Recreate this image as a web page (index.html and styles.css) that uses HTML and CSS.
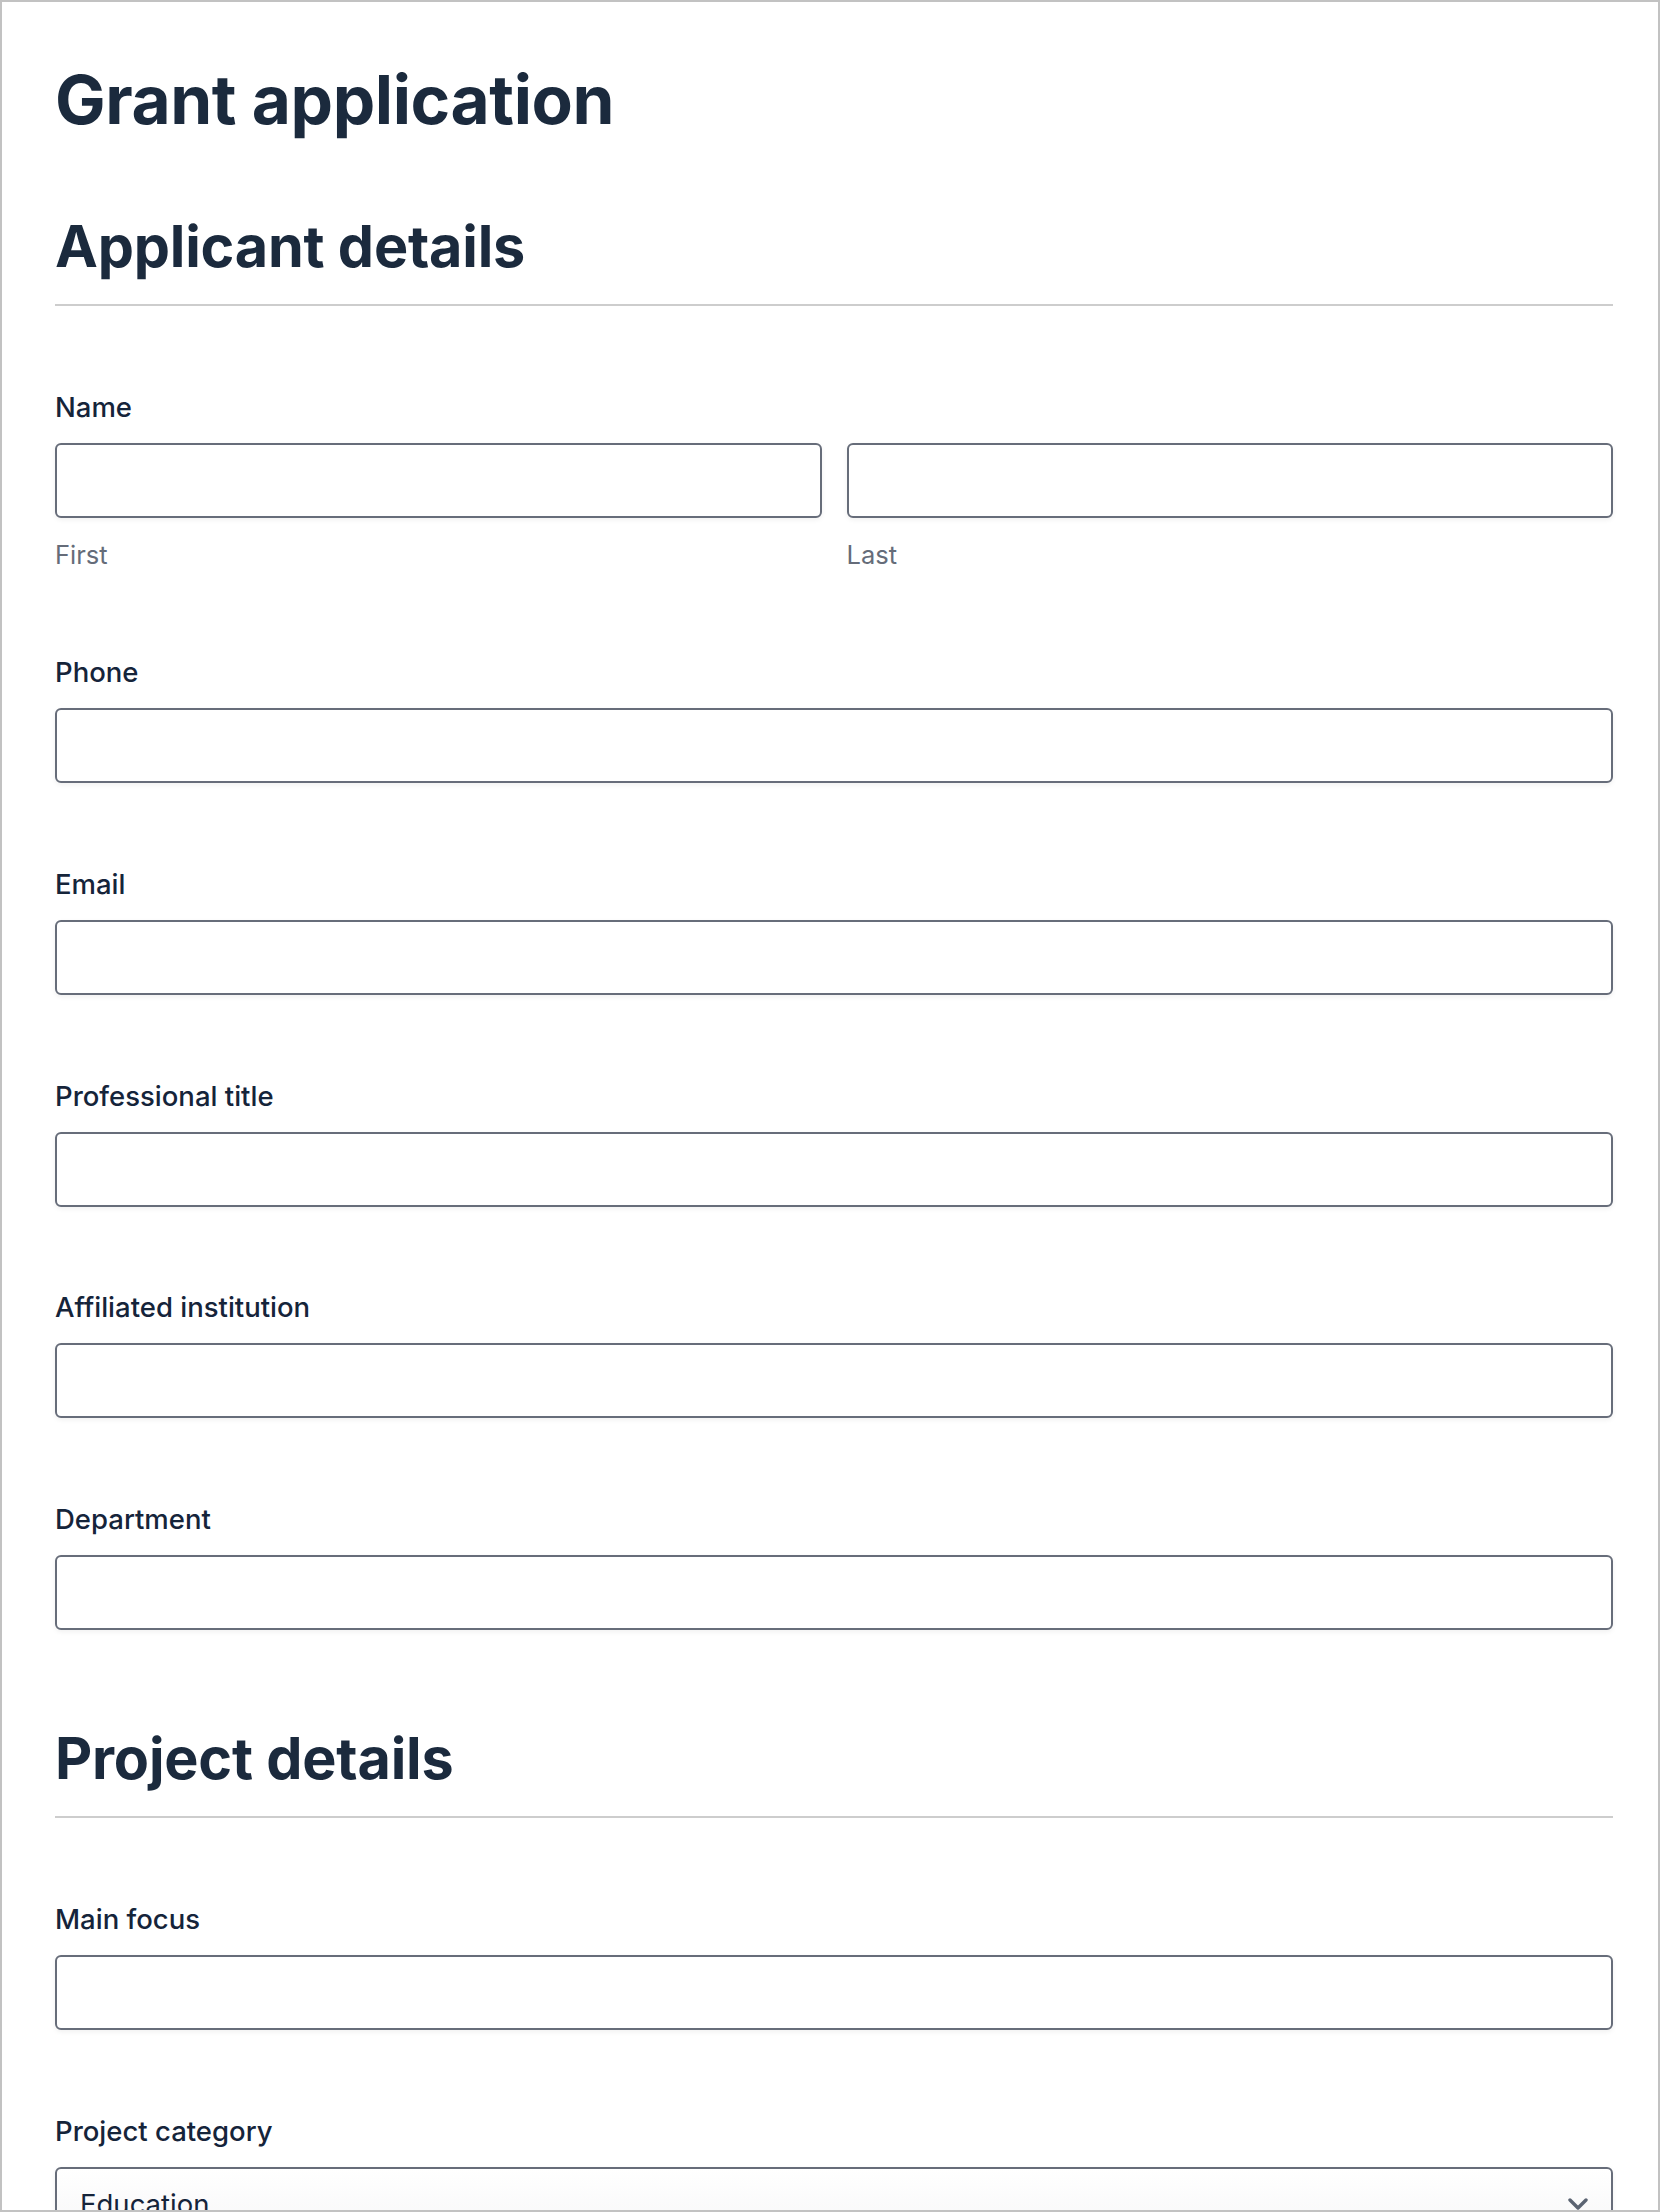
FILE: index.html
```html
<!DOCTYPE html>
<html lang="en">
<head>
  <meta charset="UTF-8">
  <meta name="viewport" content="width=device-width, initial-scale=1">
  <title>Grant application</title>
  <link rel="stylesheet" href="styles.css">
</head>
<body>
  <div class="frame">
    <form class="form">
      <h1>Grant application</h1>

      <section class="section">
        <h2>Applicant details</h2>

        <div class="field">
          <label>Name</label>
          <div class="name-row">
            <div class="sub-field">
              <input type="text">
              <span class="hint">First</span>
            </div>
            <div class="sub-field">
              <input type="text">
              <span class="hint">Last</span>
            </div>
          </div>
        </div>

        <div class="field">
          <label for="phone">Phone</label>
          <input id="phone" type="tel">
        </div>

        <div class="field">
          <label for="email">Email</label>
          <input id="email" type="email">
        </div>

        <div class="field">
          <label for="title">Professional title</label>
          <input id="title" type="text">
        </div>

        <div class="field">
          <label for="institution">Affiliated institution</label>
          <input id="institution" type="text">
        </div>

        <div class="field">
          <label for="department">Department</label>
          <input id="department" type="text">
        </div>
      </section>

      <section class="section">
        <h2>Project details</h2>

        <div class="field">
          <label for="focus">Main focus</label>
          <input id="focus" type="text">
        </div>

        <div class="field">
          <label for="category">Project category</label>
          <div class="select-wrap">
            <select id="category">
              <option>Education</option>
              <option>Research</option>
              <option>Community</option>
            </select>
            <svg class="chevron" width="20" height="12" viewBox="0 0 20 12" fill="none">
              <path d="M2 2l8 8 8-8" stroke="#5b6472" stroke-width="3.4" stroke-linecap="round" stroke-linejoin="round"/>
            </svg>
          </div>
        </div>
      </section>
    </form>
  </div>
</body>
</html>
```

FILE: styles.css
```css
html, body {
  margin: 0;
  padding: 0;
}
body {
  font-family: Inter, "Noto Sans", Arial, sans-serif;
  background: #fff;
  color: #15243a;
}
.frame {
  height: 100vh;
  box-sizing: border-box;
  border: 2px solid #c2c2c2;
  overflow: hidden;
  padding: 57px 45px 0 53px;
}
.form {
  display: flex;
  flex-direction: column;
}
h1 {
  margin: 0 0 72px;
  font-size: 67.5px;
  line-height: 82px;
  font-weight: 700;
  letter-spacing: -0.4px;
  color: #1b2a3d;
}
.section {
  display: flex;
  flex-direction: column;
  gap: 85.8px;
  margin-bottom: 95px;
}
h2 {
  margin: 0;
  padding-bottom: 25px;
  border-bottom: 2px solid #cdcdcd;
  font-size: 57.5px;
  line-height: 66px;
  font-weight: 700;
  letter-spacing: -0.2px;
  color: #1b2a3d;
}
.field {
  display: flex;
  flex-direction: column;
}
.field label {
  font-size: 27.5px;
  line-height: 30px;
  font-weight: 500;
  color: #15243a;
  margin-bottom: 21px;
}
.name-row {
  display: grid;
  grid-template-columns: 1fr 1fr;
  gap: 25px;
}
.sub-field {
  display: flex;
  flex-direction: column;
}
.hint {
  margin-top: 20px;
  font-size: 25.5px;
  line-height: 33.5px;
  color: #656c79;
}
input, select {
  display: block;
  width: 100%;
  box-sizing: border-box;
  height: 75px;
  border: 2px solid #676d7a;
  border-radius: 6px;
  background: #fff;
  box-shadow: 0 2px 5px rgba(0, 0, 0, 0.06);
  font-family: inherit;
  font-size: 27.5px;
  color: #15243a;
  padding: 0 23px;
  outline: none;
}
.select-wrap {
  position: relative;
}
select {
  appearance: none;
  -webkit-appearance: none;
  background: linear-gradient(#ffffff, #f6f6f7);
}
.chevron {
  position: absolute;
  right: 25px;
  top: 31px;
  pointer-events: none;
}
```
